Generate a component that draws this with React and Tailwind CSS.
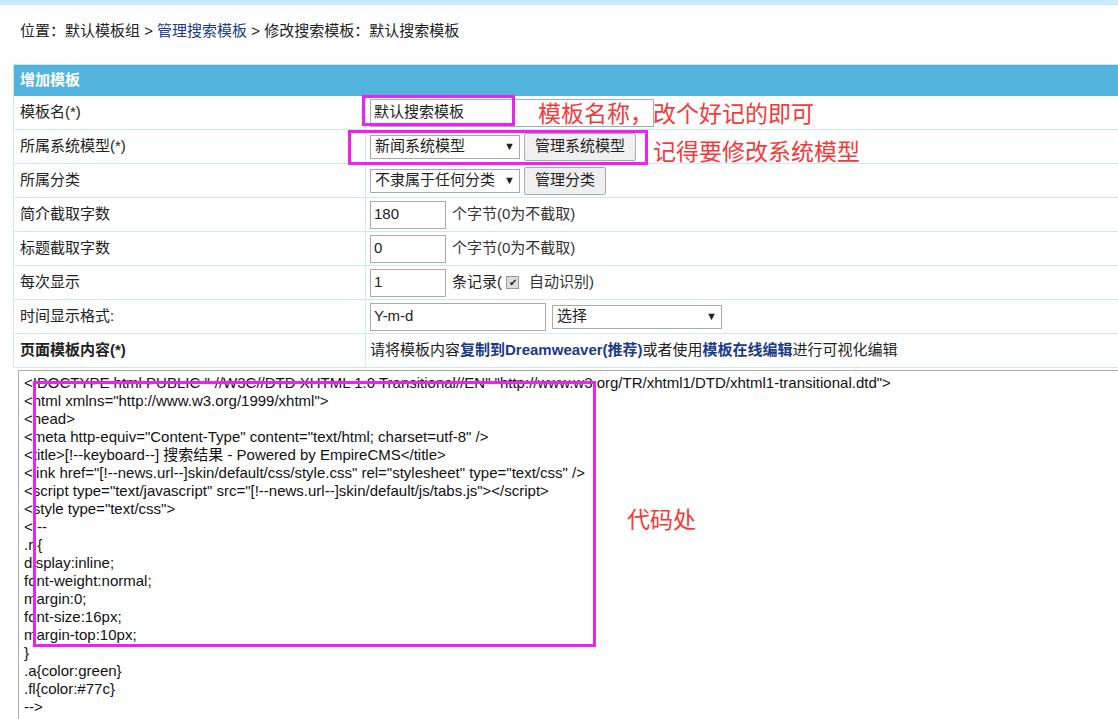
import React from "react";

const code = `<!DOCTYPE html PUBLIC "-//W3C//DTD XHTML 1.0 Transitional//EN" "http://www.w3.org/TR/xhtml1/DTD/xhtml1-transitional.dtd">
<html xmlns="http://www.w3.org/1999/xhtml">
<head>
<meta http-equiv="Content-Type" content="text/html; charset=utf-8" />
<title>[!--keyboard--] 搜索结果 - Powered by EmpireCMS</title>
<link href="[!--news.url--]skin/default/css/style.css" rel="stylesheet" type="text/css" />
<script type="text/javascript" src="[!--news.url--]skin/default/js/tabs.js"></script>
<style type="text/css">
<!--
.r {
display:inline;
font-weight:normal;
margin:0;
font-size:16px;
margin-top:10px;
}
.a{color:green}
.fl{color:#77c}
-->`;

const Row = ({ label, bold, children }) => (
	<div className="flex border-b border-[#cde9f6]">
		<div className={"w-[352px] shrink-0 border-r border-[#cde9f6] px-[6px] flex items-center h-[33px] " + (bold ? "font-bold" : "")}>{label}</div>
		<div className="flex items-center gap-[4px] px-[4px] flex-1">{children}</div>
	</div>
);

const Input = ({ w, value }) => (
	<div className={"h-[28px] border border-[#aaa] bg-white flex items-center px-[3px] " + w}>{value}</div>
);

const Select = ({ w, value }) => (
	<div className={"h-[24px] border border-[#aaa] bg-white flex items-center justify-between px-[4px] " + w}>
		<span>{value}</span>
		<span className="text-[11px]">▼</span>
	</div>
);

const Btn = ({ children }) => (
	<div className="h-[28px] border border-[#aaa] rounded-[2px] bg-[#f0f0f0] flex items-center px-[10px]">{children}</div>
);

export default function App() {
	return (
		<div className="relative w-[1118px] h-[719px] overflow-hidden bg-white text-[15px] text-[#222]" style={{ fontFamily: '"Liberation Sans", Arial, "Noto Sans CJK SC", sans-serif' }}>
			<div className="h-[5px] bg-[#c8ecfb]" />
			<div className="pl-[20px] pt-[15px] h-[59px]">
				位置：默认模板组 &gt; <span className="text-[#1a3a8a]">管理搜索模板</span> &gt; 修改搜索模板：默认搜索模板
			</div>
			<div className="ml-[13px] border-l border-[#cde9f6]">
				<div className="h-[32px] bg-[#51b3de] text-white font-bold flex items-center px-[6px] border-t border-[#cde9f6]">增加模板</div>
				<Row label="模板名(*)"><Input w="w-[284px]" value="默认搜索模板" /></Row>
				<Row label="所属系统模型(*)"><Select w="w-[150px]" value="新闻系统模型" /><Btn>管理系统模型</Btn></Row>
				<Row label="所属分类"><Select w="w-[150px]" value="不隶属于任何分类" /><Btn>管理分类</Btn></Row>
				<Row label="简介截取字数"><Input w="w-[76px]" value="180" /><span className="ml-[2px] text-[#333]">个字节(0为不截取)</span></Row>
				<Row label="标题截取字数"><Input w="w-[76px]" value="0" /><span className="ml-[2px] text-[#333]">个字节(0为不截取)</span></Row>
				<Row label="每次显示">
					<Input w="w-[76px]" value="1" />
					<span className="ml-[2px]">条记录(</span>
					<span className="w-[13px] h-[13px] border border-[#999] bg-[#ddd] text-[10px] leading-[11px] text-center">✔</span>
					<span className="ml-[6px] text-[#333]">自动识别)</span>
				</Row>
				<Row label="时间显示格式:"><Input w="w-[176px]" value="Y-m-d" /><Select w="w-[170px] ml-[2px]" value="选择" /></Row>
				<Row label="页面模板内容(*)" bold>
					<span>请将模板内容<b className="text-[#1a3a8a]">复制到Dreamweaver(推荐)</b>或者使用<b className="text-[#1a3a8a]">模板在线编辑</b>进行可视化编辑</span>
				</Row>
			</div>
			<div className="ml-[18px] mt-[2px] border border-[#aaa] border-r-0 h-[400px] px-[5px] pt-[3px] whitespace-pre leading-[18px] text-[15px] text-[#111]">{code}</div>

			<div className="absolute left-[362px] top-[95px] w-[153px] h-[31px] border-[3px] border-[#ee22ee]" />
			<div className="absolute left-[348px] top-[130px] w-[300px] h-[35px] border-[3px] border-[#ee22ee]" />
			<div className="absolute left-[33px] top-[381px] w-[563px] h-[266px] border-[3px] border-[#ee22ee]" />
			<div className="absolute left-[538px] top-[97px] text-[23px] text-[#f23a3a]">模板名称，改个好记的即可</div>
			<div className="absolute left-[653px] top-[135px] text-[23px] text-[#f23a3a]">记得要修改系统模型</div>
			<div className="absolute left-[627px] top-[503px] text-[23px] text-[#f23a3a]">代码处</div>
		</div>
	);
}
